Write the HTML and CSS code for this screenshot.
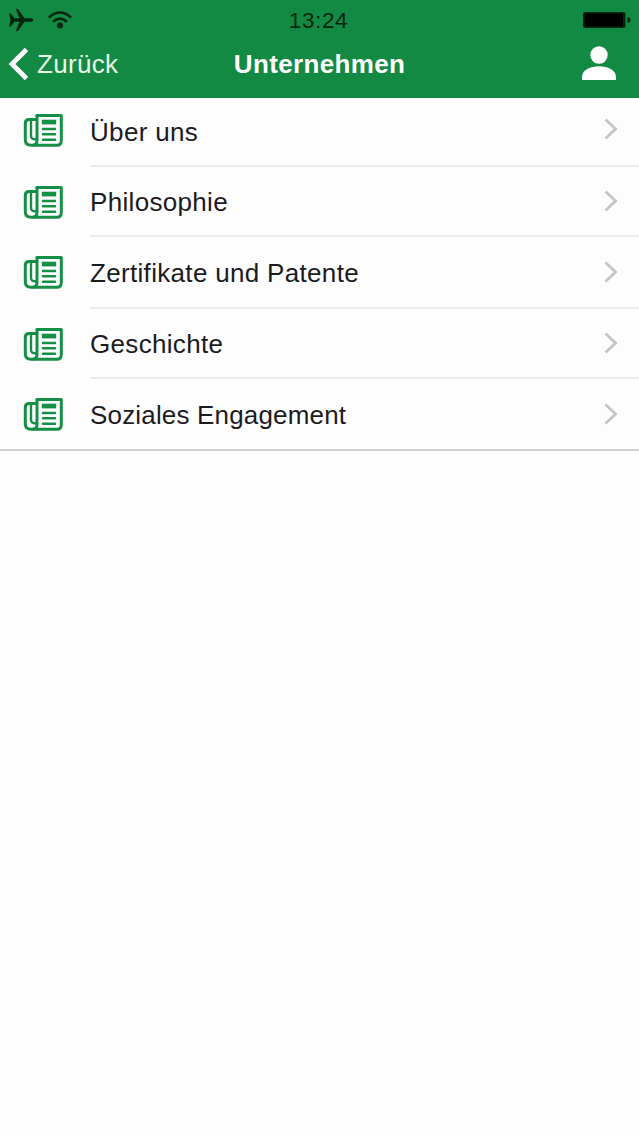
FILE: index.html
```
<!DOCTYPE html>
<html lang="de">
<head>
<meta charset="utf-8">
<title>Unternehmen</title>
<link rel="stylesheet" href="styles.css">
</head>
<body>
<svg class="symbols" aria-hidden="true">
  <symbol id="news" viewBox="0 0 40 36">
    <g fill="none" stroke="#168f46" stroke-width="3" stroke-linejoin="round" stroke-linecap="round">
      <path d="M14 3.600H38.300V28.500Q38.300 33.300 34 33.300H8Q2.300 33.300 2.300 27.500V11.500Q2.300 7.500 6 7.500H13.500"/>
      <path d="M14 3.600V28Q14 33 10.500 33"/>
      <path d="M8 8V24Q8 27.500 12.800 27.300" stroke-width="2.400"/>
      <path d="M20 17H32M20 22.300H32M20 27.800H32" stroke-width="2.500"/>
    </g>
    <path d="M18.800 7.700H33.200V12.400H18.800Z" fill="#168f46"/>
  </symbol>
  <symbol id="chevron" viewBox="0 0 14 22">
    <path d="M1.500 1.500L11.600 11L1.500 20.500" fill="none" stroke="#c5c5c9" stroke-width="2.800"/>
  </symbol>
</svg>
<header class="header">
  <div class="status">
    <div class="signals">
      <svg class="plane" viewBox="0 0 26 22"><path d="M1 4.500H2.800L6.500 9.300H11.500L8 0H10L16.500 9.300H23Q25.500 9.600 25.500 11Q25.500 12.400 23 12.700H16.500L10 22H8L11.500 12.700H6.500L2.800 17.500H1L2.500 11Z"/></svg>
      <svg class="wifi" viewBox="0 0 24 18"><g fill="none" stroke="#06260f" stroke-width="2.600"><path d="M1 6.500Q12-3.500 23 6.500"/><path d="M5 10.800Q12 4.400 19 10.800"/></g><circle cx="12" cy="14.600" r="3"/></svg>
    </div>
    <span class="time">13:24</span>
    <svg class="battery" viewBox="0 0 50 18"><rect x="1" y="1" width="42.500" height="16" rx="2" fill="#06260f"/><rect x="2.500" y="2.500" width="38.500" height="13" rx="1" fill="#000"/><path d="M45.500 6Q48.500 6.500 48.500 9Q48.500 11.500 45.500 12Z" fill="#06260f"/></svg>
  </div>
  <nav class="nav">
    <a class="back"><svg class="back-arrow" viewBox="0 0 22 34"><path d="M18.500 2.500L4 17L18.500 31.500" fill="none" stroke="#fff" stroke-width="4.800"/></svg><span class="back-label">Zurück</span></a>
    <h1 class="title">Unternehmen</h1>
    <svg class="user" viewBox="0 0 34 34"><circle cx="17" cy="9" r="8.700"/><path d="M0 34V31C0 16.500 34 16.500 34 31V34Z"/></svg>
  </nav>
</header>
<main class="list">
  <a class="row first"><svg class="news"><use href="#news"/></svg><span class="cell"><span class="label">Über uns</span><svg class="chevron"><use href="#chevron"/></svg></span></a>
  <a class="row"><svg class="news"><use href="#news"/></svg><span class="cell"><span class="label">Philosophie</span><svg class="chevron"><use href="#chevron"/></svg></span></a>
  <a class="row tall"><svg class="news"><use href="#news"/></svg><span class="cell"><span class="label">Zertifikate und Patente</span><svg class="chevron"><use href="#chevron"/></svg></span></a>
  <a class="row"><svg class="news"><use href="#news"/></svg><span class="cell"><span class="label">Geschichte</span><svg class="chevron"><use href="#chevron"/></svg></span></a>
  <a class="row last"><svg class="news"><use href="#news"/></svg><span class="cell"><span class="label">Soziales Engagement</span><svg class="chevron"><use href="#chevron"/></svg></span></a>
</main>
</body>
</html>
```
FILE: styles.css
```
* { box-sizing: border-box; }
body {
  margin: 0;
  min-height: 1136px;
  background: #fefdfe;
  color: #1c1b1e;
  font-family: "Liberation Sans", Arial, sans-serif;
}
svg { display: block; flex: none; }
.symbols { position: absolute; width: 0; height: 0; }
.header { height: 98px; background: #138a43; }
.status {
  display: grid;
  grid-template-columns: 1fr auto 1fr;
  height: 40px;
  padding: 0 7px 0 8px;
  align-items: center;
}
.signals { display: flex; align-items: center; gap: 14px; }
.plane { width: 26px; height: 22px; fill: #06260f; }
.wifi { width: 24px; height: 18px; fill: #06260f; }
.time { padding: 2px 3px 0 0; font-size: 22.5px; line-height: 26px; letter-spacing: 0.6px; color: #06260f; }
.battery { width: 50px; height: 18px; justify-self: end; }
.nav {
  display: grid;
  grid-template-columns: 1fr auto 1fr;
  align-items: center;
  height: 48px;
  padding: 0 8px;
  color: #fff;
}
.back { display: flex; align-items: center; gap: 7px; }
.back-arrow { width: 22px; height: 34px; }
.back-label { font-size: 26px; line-height: 30px; letter-spacing: 0.3px; color: #e9f8e6; }
.title { margin: 0; font-size: 26px; line-height: 30px; font-weight: 700; letter-spacing: 0.35px; }
.user { width: 34px; height: 34px; margin: 0 15px 2px 0; fill: #fff; justify-self: end; }
.list { display: flex; flex-direction: column; border-bottom: 2px solid #d1d0d4; }
.row { display: flex; align-items: center; height: 70px; padding-left: 23px; }
.row.first { height: 69px; }
.row.tall { height: 72px; }
.row .news { width: 40px; height: 36px; }
.row.tall .news { margin-bottom: 2px; }
.row.first .news { margin-bottom: 6px; }
.cell {
  display: flex;
  flex: 1;
  align-items: center;
  justify-content: space-between;
  height: 100%;
  margin-left: 27px;
  padding-right: 21px;
  border-bottom: 2px solid #ecebef;
}
.last .cell { border-bottom: 0; }
.label { padding-top: 2px; font-size: 26px; line-height: 30px; letter-spacing: 0.32px; white-space: nowrap; }
.first .label { padding-top: 0; }
.last .label { letter-spacing: 0.17px; }
.chevron { width: 14px; height: 22px; }
.tall .chevron, .last .chevron { margin-bottom: 1px; }
.first .chevron { margin-bottom: 5px; }
```
